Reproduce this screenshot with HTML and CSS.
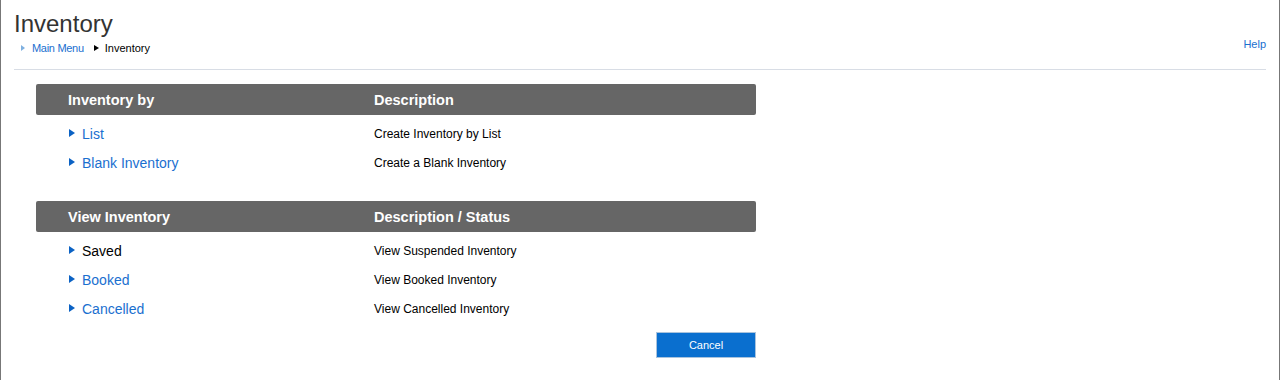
FILE: index.html
```html
<!DOCTYPE html>
<html>
<head>
<meta charset="utf-8">
<link rel="stylesheet" href="styles.css">
</head>
<body>
<div class="page">
  <div class="top">
    <div class="title-block">
      <h1 class="title">Inventory</h1>
      <div class="crumbs">
        <span class="tri tri-light"></span><a class="crumb-link" href="#">Main Menu</a>
        <span class="tri tri-dark"></span><span class="crumb-current">Inventory</span>
      </div>
    </div>
    <a class="help" href="#">Help</a>
  </div>
  <div class="rule"></div>
  <div class="content">
    <div class="section">
      <div class="bar"><span class="col1">Inventory by</span><span class="col2">Description</span></div>
      <div class="row"><span class="col1 item"><span class="tri tri-blue"></span><a class="link" href="#">List</a></span><span class="col2 desc">Create Inventory by List</span></div>
      <div class="row"><span class="col1 item"><span class="tri tri-blue"></span><a class="link" href="#">Blank Inventory</a></span><span class="col2 desc">Create a Blank Inventory</span></div>
    </div>
    <div class="section section2">
      <div class="bar"><span class="col1">View Inventory</span><span class="col2">Description / Status</span></div>
      <div class="row"><span class="col1 item"><span class="tri tri-blue"></span><span class="plain">Saved</span></span><span class="col2 desc">View Suspended Inventory</span></div>
      <div class="row"><span class="col1 item"><span class="tri tri-blue"></span><a class="link" href="#">Booked</a></span><span class="col2 desc">View Booked Inventory</span></div>
      <div class="row"><span class="col1 item"><span class="tri tri-blue"></span><a class="link" href="#">Cancelled</a></span><span class="col2 desc">View Cancelled Inventory</span></div>
    </div>
    <div class="actions"><button class="btn">Cancel</button></div>
  </div>
</div>
</body>
</html>
```
FILE: styles.css
```css
html, body {
  margin: 0;
  padding: 0;
  background: #fff;
}
body {
  font-family: Arial, "Liberation Sans", sans-serif;
}
.page {
  border-left: 1px solid #777;
  border-right: 1px solid #777;
  height: 380px;
  box-sizing: border-box;
}
.top {
  display: flex;
  justify-content: space-between;
  align-items: flex-end;
  padding: 0 13px 0 13px;
}
.title {
  margin: 10px 0 0 0;
  font-size: 24px;
  font-weight: normal;
  line-height: 28px;
  color: #333;
}
.crumbs {
  display: flex;
  align-items: center;
  height: 14px;
  margin-top: 3px;
  padding-left: 7px;
  font-size: 11px;
}
.tri {
  display: inline-block;
  width: 0;
  height: 0;
  border-style: solid;
  border-color: transparent;
}
.tri-light {
  border-width: 3.5px 0 3.5px 4px;
  border-left-color: #7fb0e0;
  margin-right: 7px;
}
.tri-dark {
  border-width: 3.5px 0 3.5px 5px;
  border-left-color: #000;
  margin-left: 10px;
  margin-right: 6px;
}
.crumb-link {
  color: #1a6fcf;
  text-decoration: none;
  letter-spacing: -0.3px;
}
.crumb-current {
  color: #000;
}
.help {
  font-size: 11px;
  color: #1a6fcf;
  text-decoration: none;
  margin-bottom: 5px;
}
.rule {
  margin: 14px 13px 0 13px;
  border-top: 1px solid #d8dde5;
}
.content {
  padding: 14px 0 0 35px;
  width: 720px;
}
.bar {
  display: flex;
  align-items: center;
  height: 31px;
  background: #666;
  border-radius: 2px;
  color: #fff;
  font-weight: bold;
  font-size: 14.5px;
  margin-bottom: 4px;
}
.col1 {
  width: 306px;
  padding-left: 32px;
  box-sizing: content-box;
  flex: none;
}
.row {
  display: flex;
  align-items: center;
  height: 29px;
}
.item {
  display: flex;
  align-items: center;
  font-size: 14px;
}
.tri-blue {
  border-width: 4.5px 0 4.5px 6px;
  border-left-color: #0b62c4;
  margin-left: 1px;
  margin-right: 7px;
  position: relative;
  top: -1px;
}
.link {
  color: #1a6fcf;
  text-decoration: none;
}
.plain {
  color: #000;
}
.desc {
  font-size: 12px;
  color: #000;
}
.section2 {
  margin-top: 24px;
}
.actions {
  display: flex;
  justify-content: flex-end;
  margin-top: 9px;
}
.btn {
  width: 100px;
  height: 26px;
  background: #0a6fcf;
  border: 1px solid #a9c3dd;
  color: #fff;
  font-family: Arial, "Liberation Sans", sans-serif;
  font-size: 11px;
  padding: 0;
}
```
